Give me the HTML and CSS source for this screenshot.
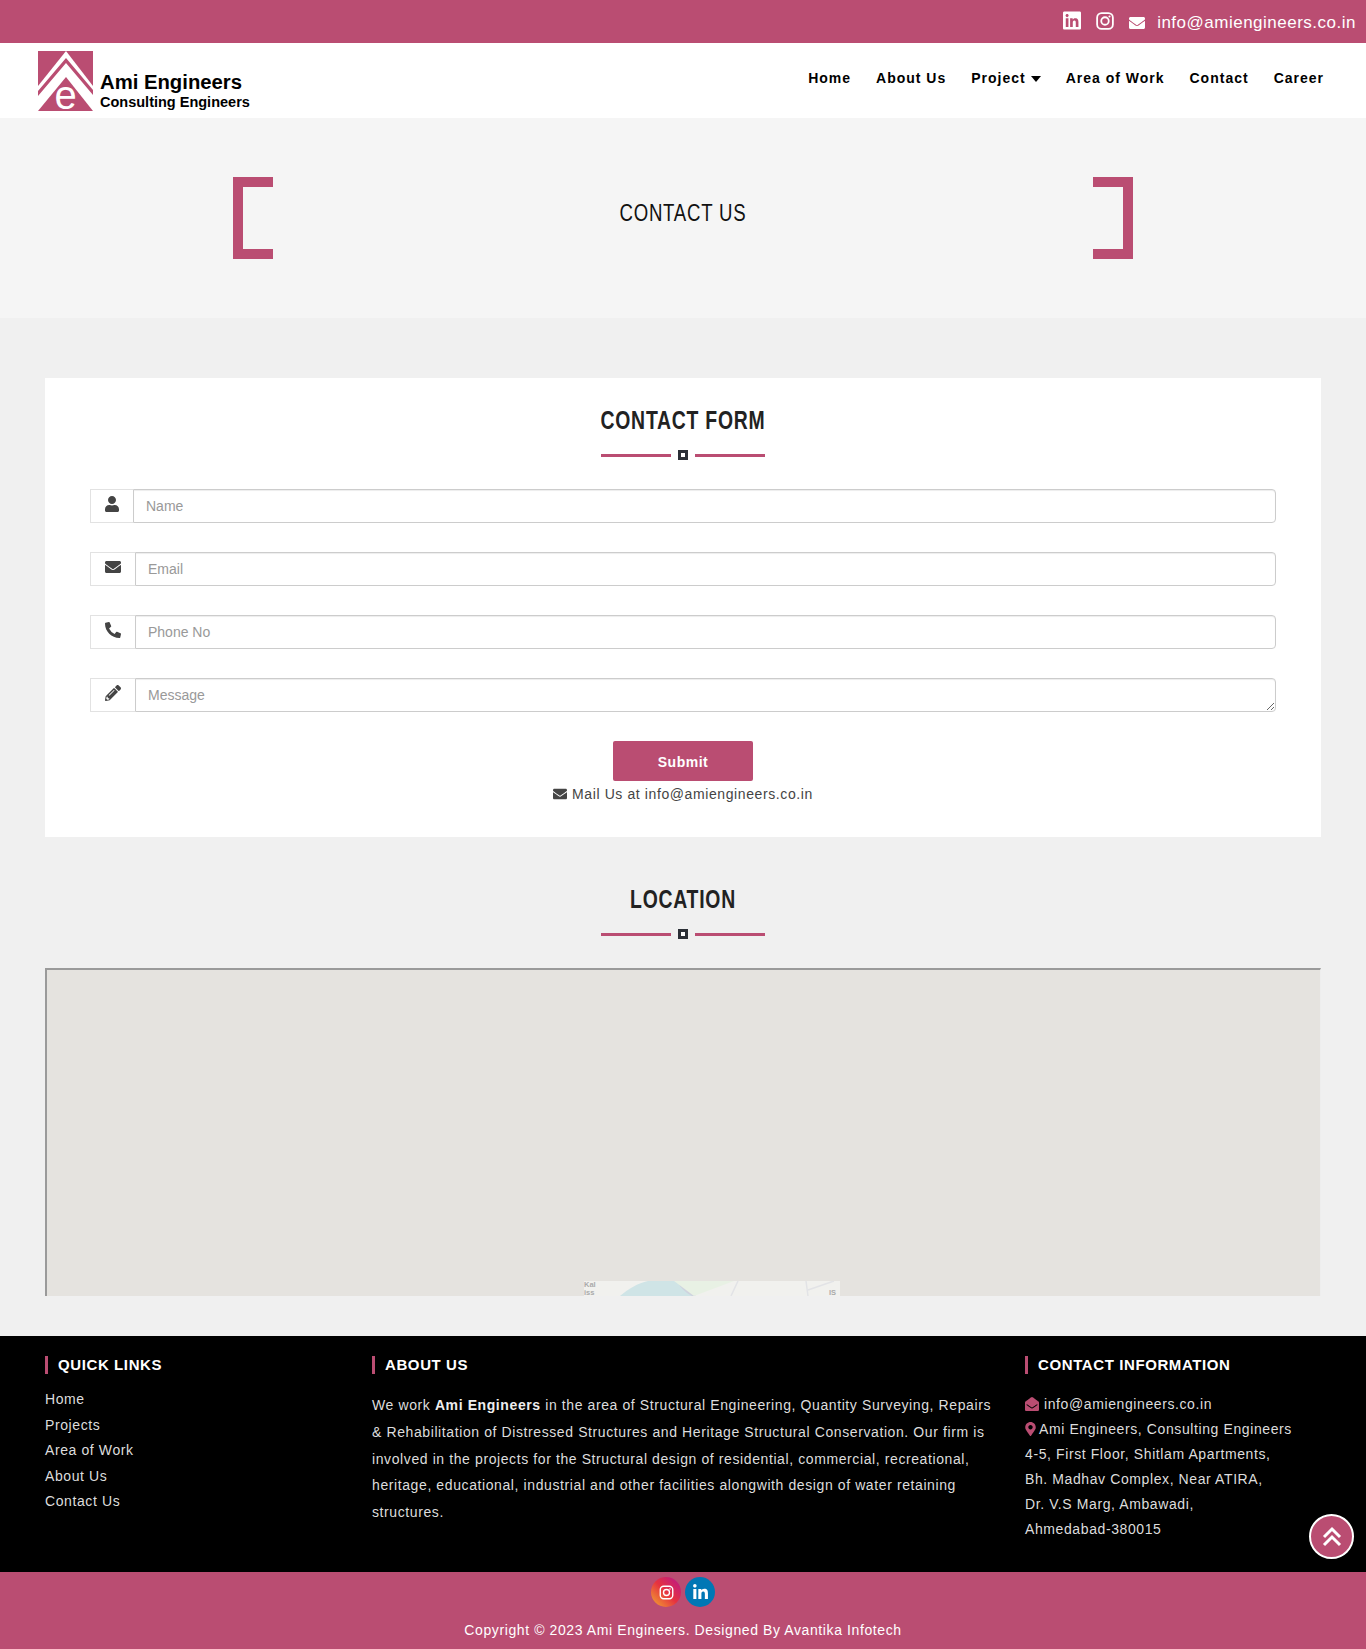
FILE: index.html
```html
<!DOCTYPE html>
<html lang="en">
<head>
    <meta charset="UTF-8">
    <meta name="viewport" content="width=device-width, initial-scale=1.0">
    <title>Contact Us - Ami Engineers</title>
    <link rel="stylesheet" href="styles.css">
</head>
<body>

<div class="top-bar">
    <a class="top-icon" href="#"><svg class="ic-linkedin" viewBox="0 0 448 512"><path d="M416 32H31.9C14.3 32 0 46.5 0 64.3v383.4C0 465.5 14.3 480 31.9 480H416c17.6 0 32-14.5 32-32.3V64.3c0-17.8-14.4-32.3-32-32.3zM135.4 416H69V202.2h66.5V416zm-33.2-243c-21.3 0-38.5-17.3-38.5-38.5S80.9 96 102.2 96c21.2 0 38.5 17.3 38.5 38.5 0 21.3-17.2 38.5-38.5 38.5zm282.1 243h-66.4V312c0-24.8-.5-56.7-34.5-56.7-34.6 0-39.9 27-39.9 54.9V416h-66.4V202.2h63.7v29.2h.9c8.9-16.8 30.6-34.5 62.9-34.5 67.2 0 79.7 44.3 79.7 101.9V416z"/></svg></a>
    <a class="top-icon" href="#"><svg class="ic-insta" viewBox="0 0 24 24"><rect x="1.5" y="1.5" width="21" height="21" rx="6" fill="none" stroke="#fff" stroke-width="2.4"/><circle cx="12" cy="12" r="5" fill="none" stroke="#fff" stroke-width="2.4"/><circle cx="18" cy="6" r="1.4" fill="#fff"/></svg></a>
    <a class="top-mail" href="#"><svg class="ic-mail" viewBox="0 0 512 512"><path d="M502.3 190.8c3.9-3.1 9.7-.2 9.7 4.7V400c0 26.5-21.5 48-48 48H48c-26.5 0-48-21.5-48-48V195.6c0-5 5.7-7.8 9.7-4.7 22.4 17.4 52.1 39.5 154.1 113.6 21.1 15.4 56.7 47.8 92.2 47.6 35.7.3 72-32.8 92.3-47.6 102-74.1 131.6-96.3 154-113.7zM256 320c23.2.4 56.6-29.2 73.4-41.4 132.7-96.3 142.8-104.7 173.4-128.7 5.8-4.5 9.2-11.5 9.2-18.9v-19c0-26.5-21.5-48-48-48H48C21.5 64 0 85.5 0 112v19c0 7.4 3.4 14.3 9.2 18.9 30.6 23.9 40.7 32.4 173.4 128.7 16.8 12.2 50.2 41.8 73.4 41.4z"/></svg>info@amiengineers.co.in</a>
</div>

<nav class="navbar">
    <a class="brand" href="#">
        <svg class="brand-mark" viewBox="0 0 55 60">
            <rect width="55" height="60" fill="#ba4d72"/>
            <polygon points="28,0 55,35 55,60 0,60 0,35" fill="#fff"/>
            <polygon points="28,7 55,39 55,44 28,12 0,45 0,40" fill="#ba4d72"/>
            <polygon points="28,26 55,60 0,60" fill="#ba4d72"/>
            <text class="brand-e" x="28" y="58" text-anchor="middle">e</text>
        </svg>
        <span class="brand-text">
            <span class="brand-name">Ami Engineers</span>
            <span class="brand-sub">Consulting Engineers</span>
        </span>
    </a>
    <ul class="nav-links">
        <li><a href="#">Home</a></li>
        <li><a href="#">About Us</a></li>
        <li><a href="#">Project <span class="caret"></span></a></li>
        <li><a href="#">Area of Work</a></li>
        <li><a href="#">Contact</a></li>
        <li><a href="#">Career</a></li>
    </ul>
</nav>

<div class="banner">
    <div class="bracket bracket-left"></div>
    <h1>CONTACT US</h1>
    <div class="bracket bracket-right"></div>
</div>

<div class="main">
    <div class="form-card">
        <h2 class="section-title">CONTACT FORM</h2>
        <div class="divider"><span></span><i></i><span></span></div>

        <form>
            <div class="input-group">
                <span class="addon"><svg class="ic-user" viewBox="0 0 448 512"><path d="M224 256c70.7 0 128-57.3 128-128S294.7 0 224 0 96 57.3 96 128s57.3 128 128 128zm89.6 32h-16.7c-22.2 10.2-46.9 16-72.9 16s-50.6-5.8-72.9-16h-16.7C60.2 288 0 348.2 0 422.4V464c0 26.5 21.5 48 48 48h352c26.5 0 48-21.5 48-48v-41.6c0-74.2-60.2-134.4-134.4-134.4z"/></svg></span>
                <input type="text" placeholder="Name">
            </div>
            <div class="input-group">
                <span class="addon"><svg class="ic-addon" viewBox="0 0 512 512"><path d="M502.3 190.8c3.9-3.1 9.7-.2 9.7 4.7V400c0 26.5-21.5 48-48 48H48c-26.5 0-48-21.5-48-48V195.6c0-5 5.7-7.8 9.7-4.7 22.4 17.4 52.1 39.5 154.1 113.6 21.1 15.4 56.7 47.8 92.2 47.6 35.7.3 72-32.8 92.3-47.6 102-74.1 131.6-96.3 154-113.7zM256 320c23.2.4 56.6-29.2 73.4-41.4 132.7-96.3 142.8-104.7 173.4-128.7 5.8-4.5 9.2-11.5 9.2-18.9v-19c0-26.5-21.5-48-48-48H48C21.5 64 0 85.5 0 112v19c0 7.4 3.4 14.3 9.2 18.9 30.6 23.9 40.7 32.4 173.4 128.7 16.8 12.2 50.2 41.8 73.4 41.4z"/></svg></span>
                <input type="text" placeholder="Email">
            </div>
            <div class="input-group">
                <span class="addon"><svg class="ic-addon" viewBox="0 0 512 512"><path d="M497.39 361.8l-112-48a24 24 0 0 0-28 6.9l-49.6 60.6A370.66 370.66 0 0 1 130.6 204.11l60.6-49.6a23.94 23.94 0 0 0 6.9-28l-48-112A24.16 24.16 0 0 0 122.6.61l-104 24A24 24 0 0 0 0 48c0 256.5 207.9 464 464 464a24 24 0 0 0 23.4-18.6l24-104a24.29 24.29 0 0 0-14.01-27.6z"/></svg></span>
                <input type="text" placeholder="Phone No">
            </div>
            <div class="input-group">
                <span class="addon"><svg class="ic-addon" viewBox="0 0 512 512"><path fill-rule="evenodd" d="M497.9 142.1l-46.1 46.1c-4.7 4.7-12.3 4.7-17 0l-111-111c-4.7-4.7-4.7-12.3 0-17l46.1-46.1c18.7-18.7 49.1-18.7 67.9 0l60.1 60.1c18.8 18.7 18.8 49.1 0 67.9zM284.2 99.8L21.6 362.4.4 483.9c-2.9 16.4 11.4 30.6 27.8 27.8l121.5-21.3 262.6-262.6c4.2-4.2 4.2-11 0-15.2l-108.9-108.9c-4.3-4.1-11.1-4.1-15.3.1zM124.1 339.9c-5.5-5.5-5.5-14.3 0-19.8l154-154c5.5-5.5 14.3-5.5 19.8 0s5.5 14.3 0 19.8l-154 154c-5.5 5.5-14.3 5.5-19.8 0zM88 424h48v36.3l-64.5 11.3-31.1-31.1L51.7 376H88v48z"/></svg></span>
                <textarea placeholder="Message"></textarea>
            </div>
            <button class="submit-btn" type="button">Submit</button>
        </form>
        <p class="mail-line"><svg class="ic-addon ic-inline" viewBox="0 0 512 512"><path d="M502.3 190.8c3.9-3.1 9.7-.2 9.7 4.7V400c0 26.5-21.5 48-48 48H48c-26.5 0-48-21.5-48-48V195.6c0-5 5.7-7.8 9.7-4.7 22.4 17.4 52.1 39.5 154.1 113.6 21.1 15.4 56.7 47.8 92.2 47.6 35.7.3 72-32.8 92.3-47.6 102-74.1 131.6-96.3 154-113.7zM256 320c23.2.4 56.6-29.2 73.4-41.4 132.7-96.3 142.8-104.7 173.4-128.7 5.8-4.5 9.2-11.5 9.2-18.9v-19c0-26.5-21.5-48-48-48H48C21.5 64 0 85.5 0 112v19c0 7.4 3.4 14.3 9.2 18.9 30.6 23.9 40.7 32.4 173.4 128.7 16.8 12.2 50.2 41.8 73.4 41.4z"/></svg>Mail Us at info@amiengineers.co.in</p>
    </div>

    <h2 class="section-title location-title">LOCATION</h2>
    <div class="divider"><span></span><i></i><span></span></div>

    <div class="map">
        <!-- only the first row of map tiles has loaded -->
        <svg class="map-tiles" viewBox="0 0 256 15" preserveAspectRatio="none">
            <rect width="256" height="15" fill="#f1f1ee"/>
            <path d="M36 15C44 8 54 2 64 0h31l16 15z" fill="#cfe4e6"/>
            <path d="M95 0c3 8 10 12 16 15" fill="none" stroke="#cfd3de" stroke-width="3"/>
            <path d="M110 15l40-15h-30L90 0z" fill="#e8f1e4"/>
            <path d="M147 15l7-15M222 0l2 15M224 9l26-9" fill="none" stroke="#e2e3e6" stroke-width="1.5"/>
            <text class="map-label" x="0" y="6">Kal</text>
            <text class="map-label" x="0" y="14">iss</text>
            <text class="map-label" x="245" y="14">IS</text>
        </svg>
    </div>
</div>

<footer class="footer">
    <div class="footer-col">
        <h3>QUICK LINKS</h3>
        <ul class="quick-links">
            <li><a href="#">Home</a></li>
            <li><a href="#">Projects</a></li>
            <li><a href="#">Area of Work</a></li>
            <li><a href="#">About Us</a></li>
            <li><a href="#">Contact Us</a></li>
        </ul>
    </div>
    <div class="footer-col">
        <h3>ABOUT US</h3>
        <p class="about-text">We work <b>Ami Engineers</b> in the area of Structural Engineering, Quantity Surveying, Repairs &amp; Rehabilitation of Distressed Structures and Heritage Structural Conservation. Our firm is involved in the projects for the Structural design of residential, commercial, recreational, heritage, educational, industrial and other facilities alongwith design of water retaining structures.</p>
    </div>
    <div class="footer-col">
        <h3>CONTACT INFORMATION</h3>
        <div class="contact-info">
            <div><svg class="ic-open" viewBox="0 0 512 512"><path d="M512 464c0 26.51-21.49 48-48 48H48c-26.51 0-48-21.49-48-48V200.724a48 48 0 0 1 18.387-37.776c24.913-19.529 45.501-35.365 164.2-121.511C199.412 29.17 232.797-.347 256 .003c23.198-.354 56.596 29.172 73.413 41.433 118.687 86.137 139.303 101.995 164.2 121.512A48 48 0 0 1 512 200.724V464zm-65.666-196.605c-2.563-3.728-7.7-4.595-11.339-1.907-22.845 16.873-55.462 40.705-105.582 77.079-16.825 12.266-50.21 41.781-73.413 41.43-23.211.344-56.559-29.143-73.413-41.43-50.114-36.37-82.734-60.204-105.582-77.079-3.639-2.688-8.776-1.821-11.339 1.907l-9.072 13.196a7.998 7.998 0 0 0 1.839 10.967c22.887 16.899 55.454 40.69 105.303 76.868 20.274 14.781 56.524 47.813 92.264 47.573 35.724.242 71.961-32.771 92.263-47.573 49.85-36.179 82.418-59.97 105.303-76.868a7.998 7.998 0 0 0 1.839-10.967l-9.071-13.196z"/></svg>info@amiengineers.co.in</div>
            <div><svg class="ic-pin" viewBox="0 0 384 512"><path d="M172.268 501.67C26.97 291.031 0 268.413 0 192 0 85.961 85.961 0 192 0s192 85.961 192 192c0 76.413-26.97 99.031-172.268 309.67-9.535 13.774-29.93 13.773-39.464 0zM192 272c44.183 0 80-35.817 80-80s-35.817-80-80-80-80 35.817-80 80 35.817 80 80 80z"/></svg>Ami Engineers, Consulting Engineers</div>
            <div>4-5, First Floor, Shitlam Apartments,</div>
            <div>Bh. Madhav Complex, Near ATIRA,</div>
            <div>Dr. V.S Marg, Ambawadi,</div>
            <div>Ahmedabad-380015</div>
        </div>
    </div>
    <a class="scroll-top" href="#"><svg viewBox="0 0 24 24"><path d="M4 12l8-8 8 8M4 20l8-8 8 8" fill="none" stroke="#fff" stroke-width="3"/></svg></a>
</footer>

<div class="copyright">
    <div class="social">
        <a class="social-btn insta" href="#"><svg viewBox="0 0 24 24"><rect x="2" y="2" width="20" height="20" rx="5.5" fill="none" stroke="#fff" stroke-width="2.2"/><circle cx="12" cy="12" r="4.8" fill="none" stroke="#fff" stroke-width="2.2"/><circle cx="17.6" cy="6.4" r="1.2" fill="#fff"/></svg></a>
        <a class="social-btn linkedin" href="#"><svg viewBox="0 0 448 512"><path d="M100.28 448H7.4V148.9h92.88zM53.79 108.1C24.09 108.1 0 83.5 0 53.8a53.79 53.79 0 0 1 107.58 0c0 29.7-24.1 54.3-53.79 54.3zM447.9 448h-92.68V302.4c0-34.7-.7-79.2-48.29-79.2-48.29 0-55.69 37.7-55.69 76.7V448h-92.78V148.9h89.08v40.8h1.3c12.4-23.5 42.69-48.3 87.88-48.3 94 0 111.28 61.9 111.28 142.3V448z"/></svg></a>
    </div>
    <p>Copyright © 2023 Ami Engineers. Designed By Avantika Infotech</p>
</div>

</body>
</html>
```

FILE: styles.css
```css
* {
    box-sizing: border-box;
}
body {
    margin: 0;
    font-family: "Liberation Sans", Arial, sans-serif;
    font-size: 14px;
    letter-spacing: 0.6px;
    background-color: #f0f0f0;
    color: #444;
}
a {
    color: inherit;
    text-decoration: none;
}
ul {
    list-style: none;
    margin: 0;
    padding: 0;
}

/* top bar */
.top-bar {
    height: 43px;
    background-color: #ba4d72;
    color: #fff;
    display: flex;
    align-items: center;
    justify-content: flex-end;
    padding-right: 10px;
}
.top-icon {
    display: flex;
    margin: 0 15px 2px 0;
}
.top-icon svg {
    fill: #fff;
}
.ic-linkedin {
    width: 18px;
    height: 21px;
}
.ic-insta {
    width: 18px;
    height: 18px;
}
.top-mail {
    display: flex;
    align-items: center;
    margin-top: 2px;
    font-size: 17px;
    letter-spacing: 0.5px;
}
.ic-mail {
    width: 16px;
    height: 16px;
    fill: #fff;
    margin-right: 12px;
}

/* nav */
.navbar {
    height: 75px;
    background-color: #fff;
    display: flex;
    align-items: center;
    justify-content: space-between;
    padding: 0 42px 0 38px;
}
.brand {
    display: flex;
    align-items: flex-end;
    color: #000;
    padding-top: 1px;
    height: 60px;
}
.brand-mark {
    width: 55px;
    height: 60px;
    margin-right: 7px;
    overflow: visible;
}
.brand-e {
    font-family: "Liberation Sans", Arial, sans-serif;
    font-size: 40px;
    fill: #fff;
}
.brand-text {
    display: flex;
    flex-direction: column;
    letter-spacing: 0;
    font-weight: bold;
}
.brand-name {
    font-size: 20.3px;
    line-height: 24px;
}
.brand-sub {
    font-size: 14.5px;
    line-height: 17px;
}
.nav-links {
    display: flex;
    gap: 25px;
    padding-bottom: 5px;
}
.nav-links a {
    color: #000;
    font-weight: bold;
    font-size: 14px;
    letter-spacing: 1px;
}
.caret {
    display: inline-block;
    width: 0;
    height: 0;
    border-left: 5.5px solid transparent;
    border-right: 5.5px solid transparent;
    border-top: 6px solid #000;
    vertical-align: 1px;
}

/* banner */
.banner {
    height: 200px;
    background-color: #f5f5f5;
    display: flex;
    justify-content: space-between;
    padding: 59px 233px 0;
}
.banner h1 {
    margin: 0;
    font-weight: normal;
    font-size: 24px;
    line-height: 72px;
    letter-spacing: 1px;
    color: #111;
    transform: scaleX(0.775); /* the title font is a narrow one */
}
.bracket {
    width: 40px;
    height: 82px;
    border: 10px solid #ba4d72;
}
.bracket-left {
    border-right: none;
}
.bracket-right {
    border-left: none;
}

/* main */
.main {
    padding: 60px 45px 40px;
}
.form-card {
    background-color: #fff;
    height: 459px;
    padding: 27px 45px 0;
}
.section-title {
    margin: 0;
    font-size: 25px;
    line-height: 30px;
    letter-spacing: 1px;
    text-align: center;
    color: #222;
    transform: scaleX(0.775);
}
.location-title {
    margin-top: 47px;
}
.divider {
    display: flex;
    align-items: center;
    justify-content: center;
    gap: 7px;
    height: 10px;
    margin: 15px 0 29px;
}
.divider span {
    width: 70px;
    height: 3px;
    background-color: #ba4d72;
}
.divider i {
    width: 10px;
    height: 10px;
    border: 3px solid #2b2f36;
    background-color: #fff;
}
.input-group {
    display: flex;
    height: 34px;
    margin-bottom: 29px;
}
.addon {
    border: 1px solid #e2e2e2;
    border-right: none;
    padding: 6px 14px 0;
    background-color: #fff;
}
.addon svg {
    display: block;
    fill: #444;
}
.ic-user {
    width: 14px;
    height: 16px;
}
.ic-addon {
    width: 16px;
    height: 16px;
    fill: #444;
}
.input-group input,
.input-group textarea {
    flex: 1;
    height: 34px;
    border: 1px solid #ccc;
    box-shadow: inset 0 1px 1px rgba(0, 0, 0, 0.075);
    border-radius: 0 4px 4px 0;
    padding: 6px 12px;
    font-family: "Liberation Sans", Arial, sans-serif;
    font-size: 14px;
    color: #555;
    outline: none;
}
.input-group textarea {
    padding-top: 8px;
}
input::placeholder,
textarea::placeholder {
    color: #999;
}
.submit-btn {
    display: block;
    width: 140px;
    height: 40px;
    margin: 0 auto;
    padding-top: 3px;
    border: none;
    border-radius: 2px;
    background-color: #ba4d72;
    color: #fff;
    font-family: "Liberation Sans", Arial, sans-serif;
    font-weight: bold;
    font-size: 14px;
    letter-spacing: 0.5px;
}
.mail-line {
    margin: 3px 0 0;
    line-height: 20px;
    text-align: center;
}
.ic-inline {
    width: 14px;
    height: 14px;
    margin-right: 5px;
    vertical-align: -2px;
}
.map {
    position: relative;
    height: 328px;
    background-color: #e5e3df;
    border-top: 2px solid #9a9a9a;
    border-left: 2px solid #9a9a9a;
    border-right: 1px solid #eee;
}
.map-tiles {
    position: absolute;
    left: 537px;
    bottom: 0;
    width: 256px;
    height: 15px;
}
.map-label {
    font-size: 7.5px;
    font-weight: bold;
    letter-spacing: 0;
    fill: #aaa;
}

/* footer */
.footer {
    position: relative;
    height: 236px;
    background-color: #000;
    color: #ddd;
    display: grid;
    grid-template-columns: 327px 653px 1fr;
    padding: 20px 45px 0;
}
.footer h3 {
    margin: 0 0 13px;
    border-left: 3px solid #ba4d72;
    padding-left: 10px;
    font-size: 15px;
    line-height: 18px;
    color: #fff;
}
.quick-links li {
    line-height: 25.5px;
}
.about-text {
    margin: 18px 0 0;
    line-height: 26.8px;
    padding-right: 28px;
}
.about-text b {
    color: #eee;
}
.contact-info {
    margin-top: 18px;
    line-height: 25px;
}
.contact-info svg {
    fill: #ba4d72;
    height: 14px;
    vertical-align: -2px;
}
.ic-open {
    width: 14px;
    margin-right: 5px;
}
.ic-pin {
    width: 11px;
    margin-right: 3px;
}
.scroll-top {
    position: absolute;
    right: 12px;
    top: 178px;
    width: 45px;
    height: 45px;
    border-radius: 50%;
    border: 2px solid #fff;
    background-color: #ba4d72;
    display: flex;
    align-items: center;
    justify-content: center;
}
.scroll-top svg {
    width: 24px;
    height: 24px;
}

/* copyright */
.copyright {
    height: 77px;
    background-color: #ba4d72;
    color: #fff;
    text-align: center;
    padding-top: 5px;
}
.social {
    display: flex;
    justify-content: center;
    gap: 4px;
}
.social-btn {
    width: 30px;
    height: 30px;
    border-radius: 50%;
    display: flex;
    align-items: center;
    justify-content: center;
}
.insta {
    background: linear-gradient(45deg, #f09433 10%, #e6323f 50%, #bc1888 95%);
}
.insta svg {
    width: 15px;
    height: 15px;
}
.linkedin {
    background-color: #0077b5;
}
.linkedin svg {
    width: 15px;
    height: 17px;
    fill: #fff;
}
.copyright p {
    margin: 13px 0 0;
    line-height: 20px;
}
```
